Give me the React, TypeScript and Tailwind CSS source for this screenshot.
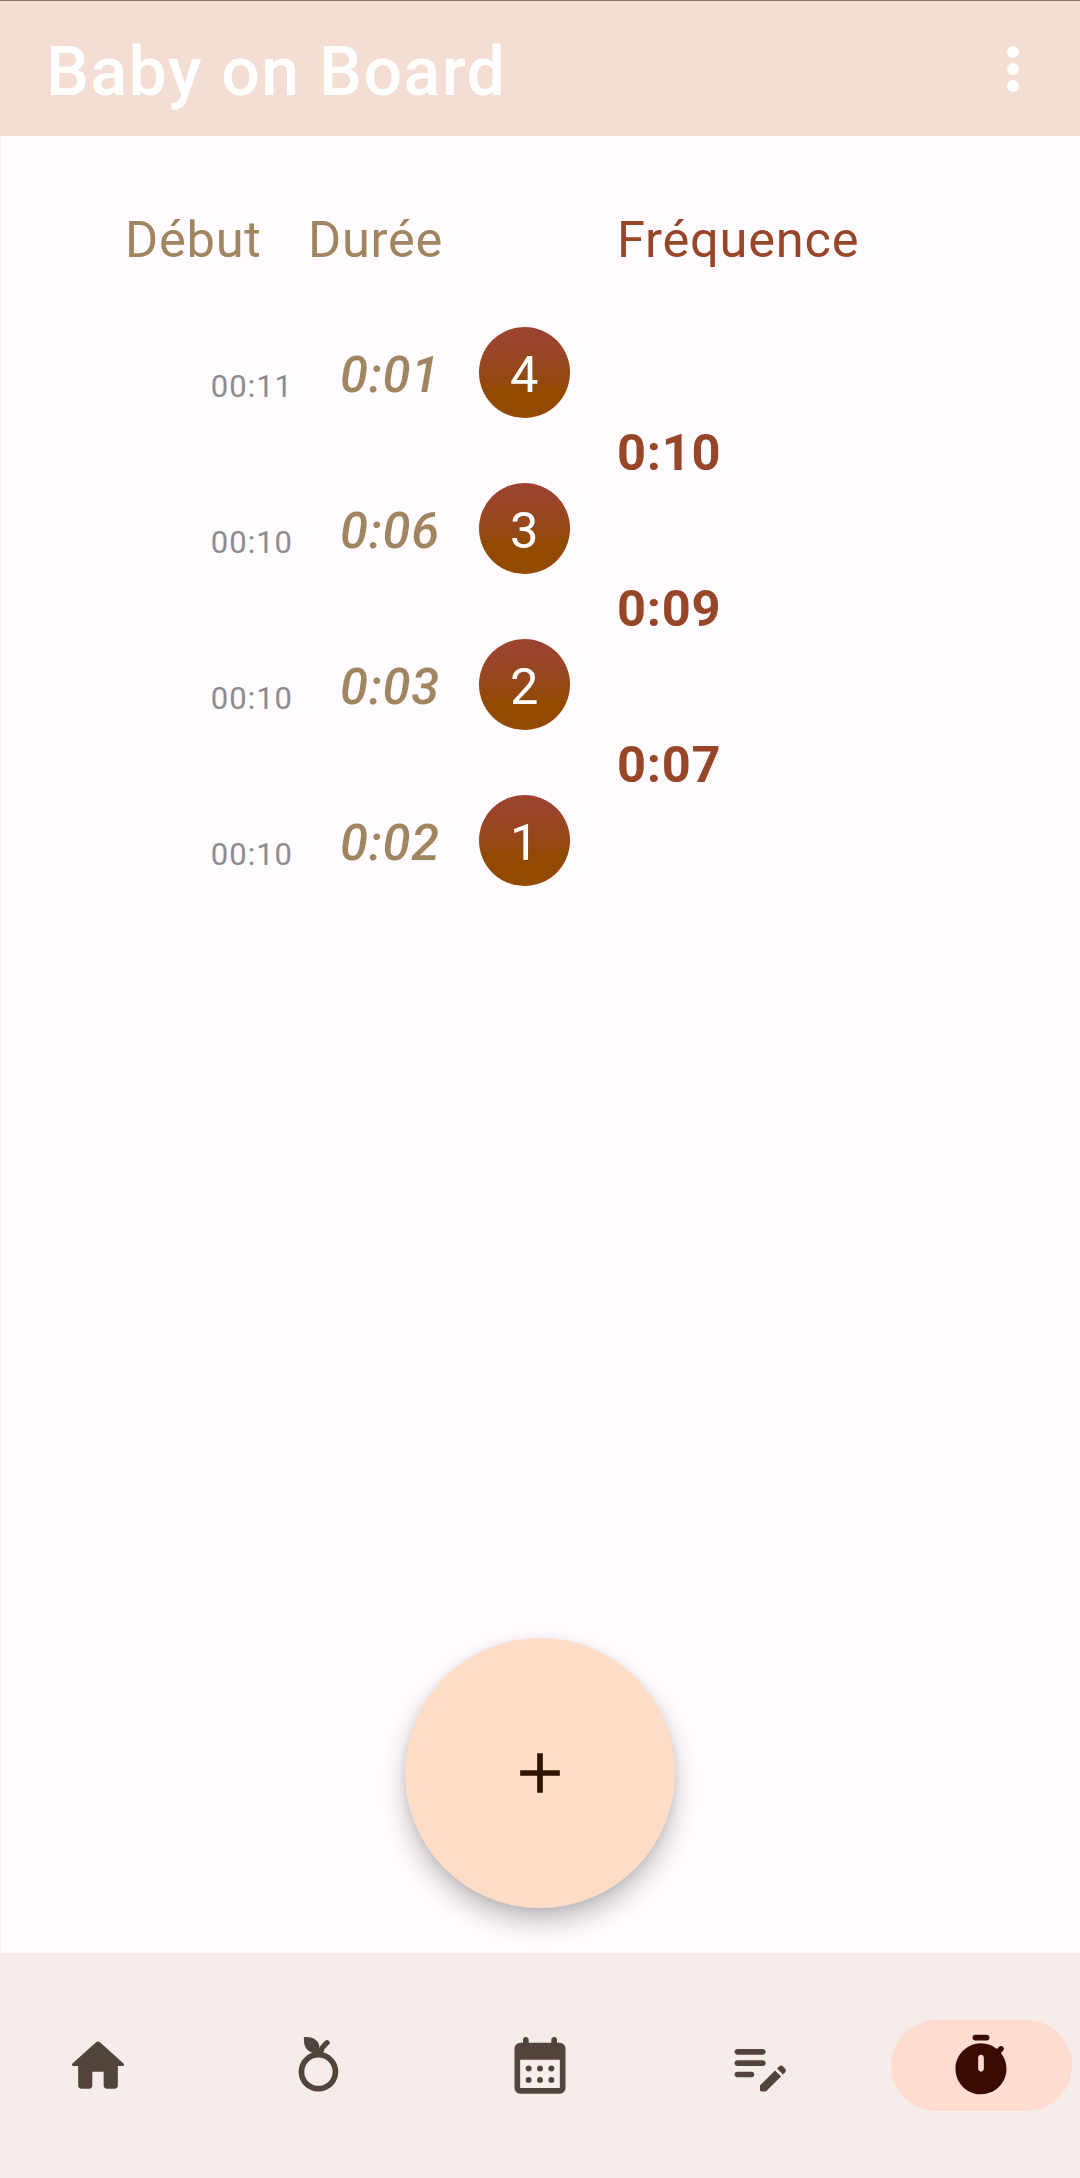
import type { ReactNode } from 'react';

const contractions = [
  { start: '00:11', duration: '0:01', index: 4 },
  { start: '00:10', duration: '0:06', index: 3 },
  { start: '00:10', duration: '0:03', index: 2 },
  { start: '00:10', duration: '0:02', index: 1 },
];

const frequencies = ['0:10', '0:09', '0:07'];

function Icon({ children }: { children: ReactNode }) {
  return (
    <svg viewBox="0 0 24 24" className="size-[68px] shrink-0" fill="currentColor">
      {children}
    </svg>
  );
}

const navItems = [
  {
    label: 'Accueil',
    icon: (
      <Icon>
        <path d="M10 19v-5h4v5c0 .55.45 1 1 1h3c.55 0 1-.45 1-1v-7h1.7c.46 0 .68-.57.33-.87L12.67 3.6c-.38-.34-.96-.34-1.34 0l-8.36 7.53c-.34.3-.13.87.33.87H5v7c0 .55.45 1 1 1h3c.55 0 1-.45 1-1z" />
      </Icon>
    ),
  },
  {
    label: 'Fruit',
    icon: (
      <Icon>
        <circle cx="11.8" cy="14" r="6" fill="none" stroke="currentColor" strokeWidth="2" />
        <path d="M6.7 1.8C9.9 1.5 12.4 3 12.2 6.1L12.1 7.4H10C7.6 6.9 6.4 4.9 6.7 1.8Z" />
        <path d="M12.4 7.3C12.9 5.7 13.7 4.7 14.8 3.8" fill="none" stroke="currentColor" strokeWidth="1.9" strokeLinecap="round" />
      </Icon>
    ),
  },
  {
    label: 'Calendrier',
    icon: (
      <Icon>
        <path
          fillRule="evenodd"
          d="M6 3.8V2.8a1 1 0 0 1 2 0v1h8V2.8a1 1 0 0 1 2 0v1h1a2 2 0 0 1 2 2v14a2 2 0 0 1-2 2H5a2 2 0 0 1-2-2V5.8a2 2 0 0 1 2-2ZM5 9.8v10h14V9.8Z"
        />
        <circle cx="8" cy="12.9" r="1.05" />
        <circle cx="12" cy="12.9" r="1.05" />
        <circle cx="16" cy="12.9" r="1.05" />
        <circle cx="8" cy="16.9" r="1.05" />
        <circle cx="12" cy="16.9" r="1.05" />
        <circle cx="16" cy="16.9" r="1.05" />
      </Icon>
    ),
  },
  {
    label: 'Notes',
    icon: (
      <Icon>
        <path d="M14 11c0 .55-.45 1-1 1H4c-.55 0-1-.45-1-1s.45-1 1-1h9c.55 0 1 .45 1 1zM3 7c0 .55.45 1 1 1h9c.55 0 1-.45 1-1s-.45-1-1-1H4c-.55 0-1 .45-1 1zm7 8c0-.55-.45-1-1-1H4c-.55 0-1 .45-1 1s.45 1 1 1h5c.55 0 1-.45 1-1zm8.01-2.13.71-.71c.39-.39 1.02-.39 1.41 0l.71.71c.39.39.39 1.02 0 1.41l-.71.71-2.12-2.12zm-.71.71-5.16 5.16c-.09.09-.14.21-.14.35v1.41c0 .28.22.5.5.5h1.41c.13 0 .26-.05.35-.15l5.16-5.16-2.12-2.11z" />
      </Icon>
    ),
  },
  {
    label: 'Chronomètre',
    active: true,
    icon: (
      <Icon>
        <path d="M10 3h4c.55 0 1-.45 1-1s-.45-1-1-1h-4c-.55 0-1 .45-1 1s.45 1 1 1zm9.03 4.39.75-.75c.38-.38.39-1.01 0-1.4l-.01-.01c-.39-.39-1.01-.38-1.4 0l-.75.75C16.07 4.74 14.12 4 12 4c-4.8 0-8.88 3.96-9 8.76C2.87 17.84 6.94 22 12 22c4.98 0 9-4.03 9-9 0-2.12-.74-4.07-1.97-5.61zM13 13c0 .55-.45 1-1 1s-1-.45-1-1V9c0-.55.45-1 1-1s1 .45 1 1v4z" />
      </Icon>
    ),
  },
];

function AppBar() {
  return (
    <header className="flex h-[136px] items-center justify-between border-t border-[#85736f] bg-[#f4ded3] pr-[33px] pl-[46px] text-white">
      <h1 className="pt-[7px] text-[68px] leading-[80px] font-medium tracking-[1.5px]">Baby on Board</h1>
      <button aria-label="Menu">
        <svg viewBox="0 0 24 24" className="size-[68px]" fill="currentColor">
          <circle cx="12" cy="6" r="2.1" />
          <circle cx="12" cy="12" r="2.1" />
          <circle cx="12" cy="18" r="2.1" />
        </svg>
      </button>
    </header>
  );
}

function BottomNav() {
  return (
    <nav className="flex h-[225px] items-center justify-between bg-[#f6ece9] pr-[8.5px] pl-[7.5px]">
      {navItems.map((item) => (
        <button
          key={item.label}
          aria-label={item.label}
          className={
            item.active
              ? 'flex h-[91px] w-[181px] items-center justify-center rounded-full bg-[#ffdbd0] text-[#3a0b00]'
              : 'flex h-[91px] w-[181px] items-center justify-center rounded-full text-[#52443c]'
          }
        >
          {item.icon}
        </button>
      ))}
    </nav>
  );
}

export default function App() {
  return (
    <div className="flex h-[2178px] w-[1080px] flex-col bg-[#fffbff] font-[Roboto,sans-serif] text-[50.6px] leading-[60px] tracking-[0.75px]">
      <AppBar />
      <main className="flex flex-1 flex-col border-l border-[#f6f1f6]">
        <div className="flex pt-[74px] pl-[124px]">
          <div className="w-[183px] text-[#a08560]">Début</div>
          <div className="w-[309px] text-[#a08560]">Durée</div>
          <div className="text-[#984628]">Fréquence</div>
        </div>

        <div className="flex pt-[57px]">
          <div className="flex w-[616px] flex-col gap-[65px]">
            {contractions.map((c) => (
              <div key={c.index} className="flex h-[91px] items-center">
                <div className="w-[292px] pt-[28px] text-right text-[31px] leading-[36px] tracking-[1px] text-[#8c8c8c]">{c.start}</div>
                <div className="w-[186px] pt-[4px] pl-[47px] font-medium text-[#a08560] italic">{c.duration}</div>
                <div className="flex size-[91px] items-center justify-center rounded-full bg-linear-to-b from-[#9c432e] from-10% to-[#914a00] to-70% pt-[4px] text-white">
                  {c.index}
                </div>
              </div>
            ))}
          </div>
          <div className="flex flex-col pt-[46px] font-bold text-[#984628]">
            {frequencies.map((f) => (
              <div key={f} className="flex h-[156px] items-center pt-[4px]">
                {f}
              </div>
            ))}
          </div>
        </div>

        <button
          aria-label="Ajouter"
          className="mt-auto mr-px mb-[45px] flex size-[270px] items-center justify-center self-center rounded-full bg-[#ffdcc6] text-[#2f1500] shadow-[0_14px_26px_rgba(0,0,0,0.24),0_2px_8px_rgba(0,0,0,0.08)]"
        >
          <svg viewBox="0 0 24 24" className="size-[68px]" fill="currentColor">
            <path d="M11 5h2v6h6v2h-6v6h-2v-6H5v-2h6Z" />
          </svg>
        </button>
      </main>
      <BottomNav />
    </div>
  );
}
